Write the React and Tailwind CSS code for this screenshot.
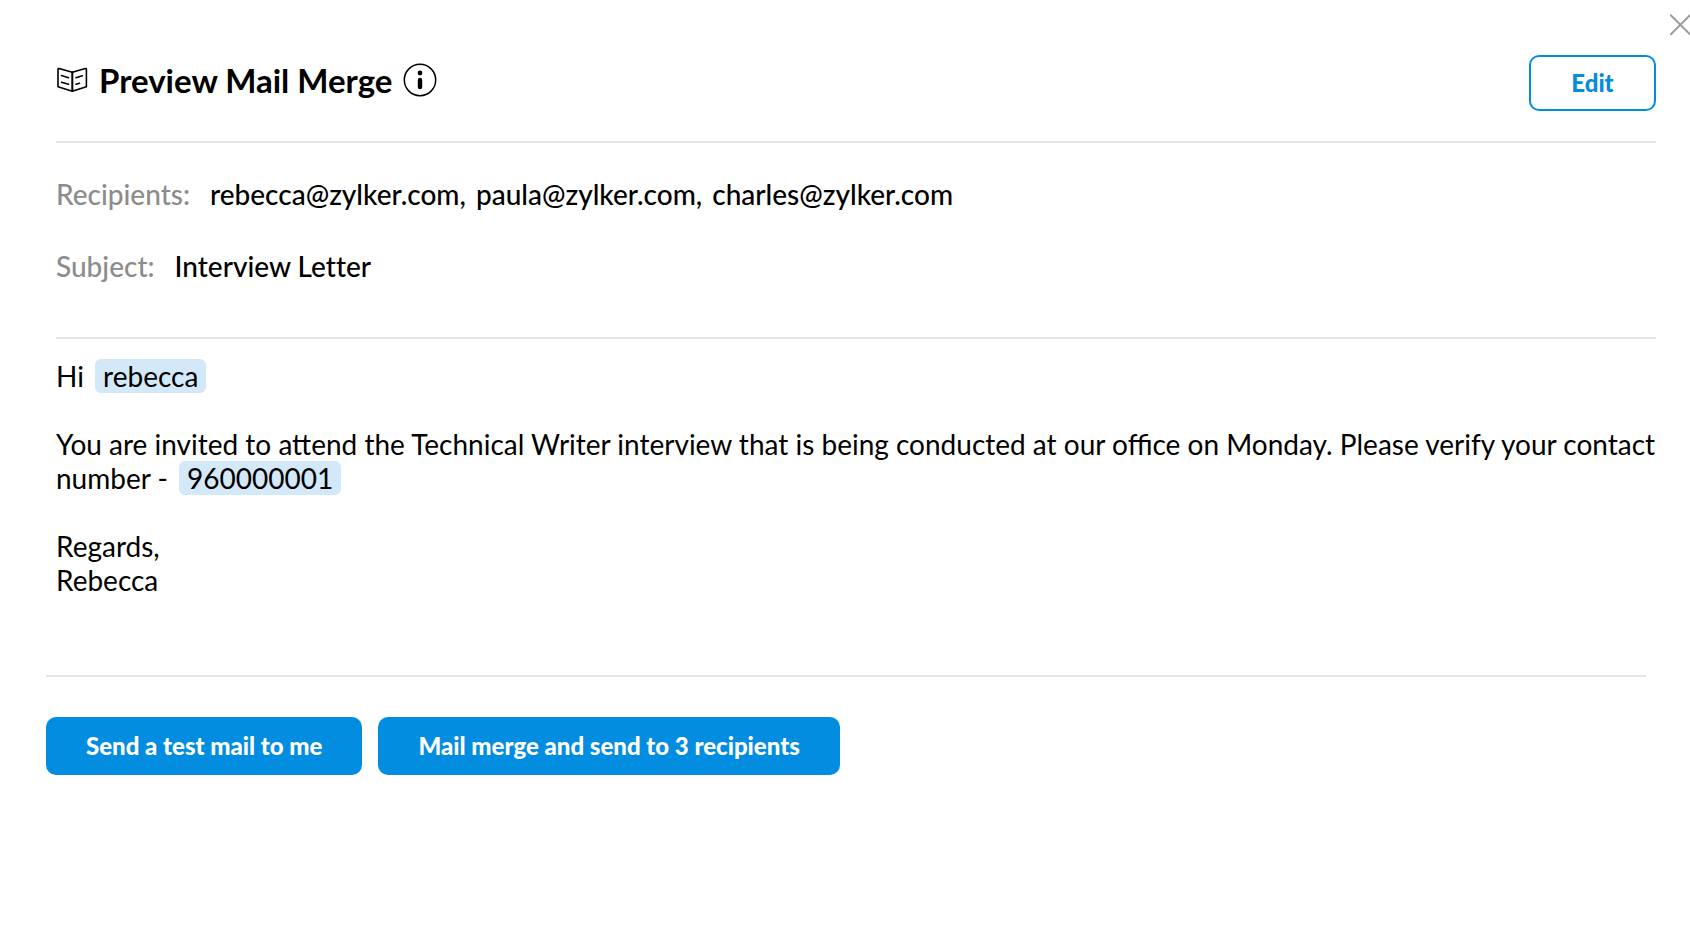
import React from 'react'

const recipients = ["rebecca@zylker.com", "paula@zylker.com", "charles@zylker.com"]

const BookIcon = () => (
    <svg className="w-8 h-8 shrink-0" viewBox="0 0 32 32" fill="none" stroke="black" strokeWidth="1.6" strokeLinecap="round" strokeLinejoin="round" aria-hidden="true">
        <path d="M16.3 8.2 3.1 4.6Q2 4.4 2 5.5V22.7L16.3 27.2 30.4 22.7V5.5Q30.4 4.4 29.3 4.6Z" />
        <path d="M16.3 8.2V27" strokeWidth="2" />
        <path d="M5.5 11.5 12.5 13.7M5.5 18.2 12.5 20.2M20 13.7 26.3 11.7M20 20.2 23.5 19.2" />
    </svg>
)

const InfoIcon = () => (
    <svg className="w-[34px] h-[34px]" viewBox="0 0 34 34" fill="none" stroke="black" aria-hidden="true">
        <circle cx="17" cy="17" r="15.7" strokeWidth="1.5" />
        <circle cx="17" cy="10" r="2.4" fill="black" stroke="none" />
        <path d="M17 17V24" strokeWidth="4.4" strokeLinecap="round" />
    </svg>
)

const MergeField = ({ children }) => (
    <span className="bg-[#d3e8f9] rounded-md px-2 ml-1">{children}</span>
)

const PrimaryButton = ({ children }) => (
    <button type="button" className="h-[58px] px-10 rounded-[10px] bg-[#038de0] text-white text-[24px] font-black cursor-pointer">
        {children}
    </button>
)

const App = () => {
    return (
        <div className="relative min-h-screen overflow-hidden bg-white text-black font-['Lato',sans-serif] text-[28px] leading-[34px] pt-[55px]">
            <button type="button" aria-label="Close" className="absolute top-[14px] right-0 cursor-pointer">
                <svg className="w-5 h-[22px]" viewBox="0 0 20 22" fill="none" stroke="#999" strokeWidth="2" strokeLinecap="round">
                    <path d="M.8 1.2 20 20.4M20 1.2 .8 20.4" />
                </svg>
            </button>

            <header className="ml-14 mr-[34px] pb-[30px] flex items-start justify-between border-b-2 border-[#e6e6e6]">
                <div className="flex items-center pt-1">
                    <BookIcon />
                    <h1 className="ml-[11px] text-[33px] leading-[42px] font-bold">Preview Mail Merge</h1>
                    <button type="button" aria-label="About mail merge" className="ml-[10px] cursor-pointer">
                        <InfoIcon />
                    </button>
                </div>
                <button type="button" className="h-14 w-[127px] rounded-[10px] border-2 border-[#038de0] text-[#038de0] text-[24px] font-black cursor-pointer">
                    Edit
                </button>
            </header>

            <dl className="ml-14 mr-[34px] pt-[34px] pb-[54px] space-y-[38px] font-medium [font-variant-ligatures:none] border-b-2 border-[#e6e6e6]">
                <div className="flex gap-5">
                    <dt className="text-[#8c8c8c]">Recipients:</dt>
                    <dd className="flex gap-[10px]">
                        {recipients.map((mail, index) => (
                            <span key={mail}>{mail}{index < recipients.length - 1 && ","}</span>
                        ))}
                    </dd>
                </div>
                <div className="flex gap-5">
                    <dt className="text-[#8c8c8c]">Subject:</dt>
                    <dd>Interview Letter</dd>
                </div>
            </dl>

            <main className="ml-14 mr-6 pt-5 pb-[78px] space-y-[34px]">
                <p>Hi <MergeField>rebecca</MergeField></p>
                <p>
                    You are invited to attend the Technical Writer interview that is being conducted at our office on Monday. Please verify your contact number - <MergeField>960000001</MergeField>
                </p>
                <p>Regards,<br />Rebecca</p>
            </main>

            <footer className="ml-[46px] mr-11 pt-10 pb-10 flex gap-4 border-t-2 border-[#e6e6e6]">
                <PrimaryButton>Send a test mail to me</PrimaryButton>
                <PrimaryButton>Mail merge and send to {recipients.length} recipients</PrimaryButton>
            </footer>
        </div>
    )
}

export default App
